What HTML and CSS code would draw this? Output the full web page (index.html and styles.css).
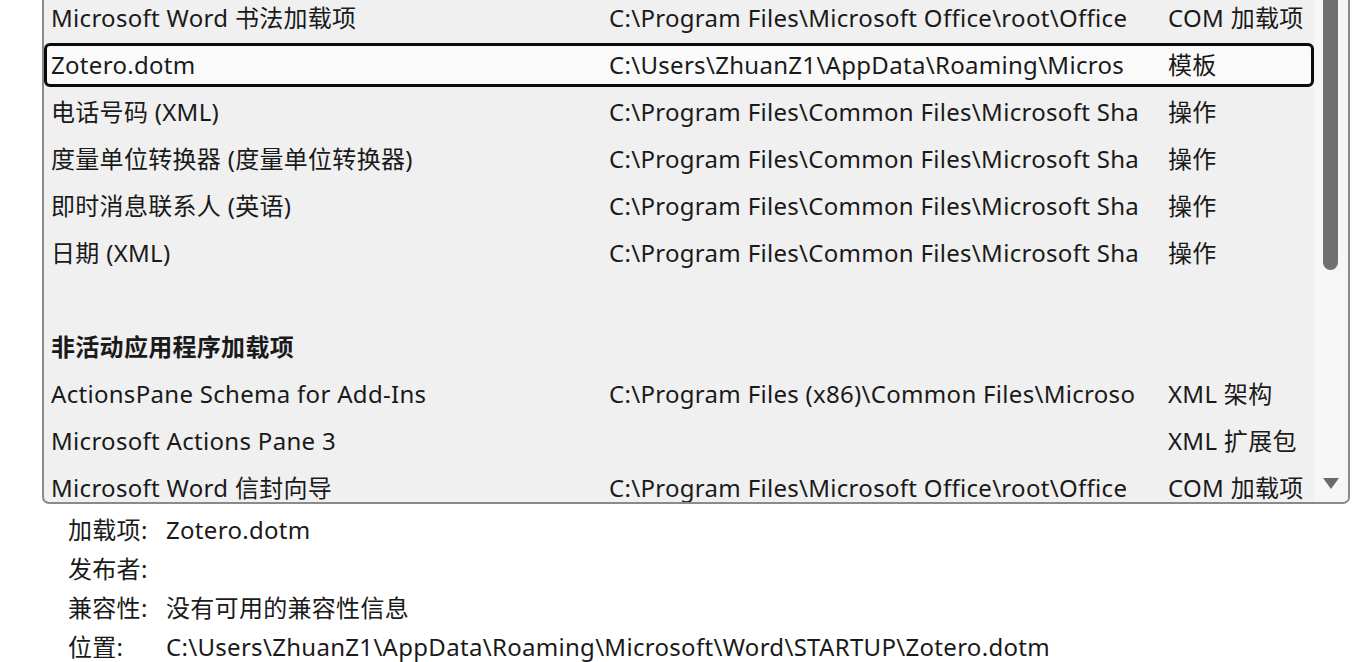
FILE: index.html
```html
<!DOCTYPE html>
<html lang="zh-CN">
<head>
    <meta charset="UTF-8">
    <title>加载项</title>
    <link rel="stylesheet" href="styles.css">
</head>
<body>

    <!-- Add-in list -->
    <div class="listbox">
        <div class="rows">
            <div class="row">
                <span>Microsoft Word 书法加载项</span>
                <span>C:\Program Files\Microsoft Office\root\Office</span>
                <span>COM 加载项</span>
            </div>
            <div class="row selected">
                <span>Zotero.dotm</span>
                <span>C:\Users\ZhuanZ1\AppData\Roaming\Micros</span>
                <span>模板</span>
            </div>
            <div class="row">
                <span>电话号码 (XML)</span>
                <span>C:\Program Files\Common Files\Microsoft Sha</span>
                <span>操作</span>
            </div>
            <div class="row">
                <span>度量单位转换器 (度量单位转换器)</span>
                <span>C:\Program Files\Common Files\Microsoft Sha</span>
                <span>操作</span>
            </div>
            <div class="row">
                <span>即时消息联系人 (英语)</span>
                <span>C:\Program Files\Common Files\Microsoft Sha</span>
                <span>操作</span>
            </div>
            <div class="row">
                <span>日期 (XML)</span>
                <span>C:\Program Files\Common Files\Microsoft Sha</span>
                <span>操作</span>
            </div>
            <div class="row"></div>
            <div class="row group">
                <span>非活动应用程序加载项</span>
            </div>
            <div class="row">
                <span>ActionsPane Schema for Add-Ins</span>
                <span>C:\Program Files (x86)\Common Files\Microso</span>
                <span>XML 架构</span>
            </div>
            <div class="row">
                <span>Microsoft Actions Pane 3</span>
                <span></span>
                <span>XML 扩展包</span>
            </div>
            <div class="row">
                <span>Microsoft Word 信封向导</span>
                <span>C:\Program Files\Microsoft Office\root\Office</span>
                <span>COM 加载项</span>
            </div>
        </div>

        <!-- Scrollbar -->
        <div class="scrollbar">
            <div class="thumb"></div>
            <div class="arrow-down"></div>
        </div>
    </div>

    <!-- Details of the selected add-in -->
    <div class="details">
        <span>加载项:</span><span>Zotero.dotm</span>
        <span>发布者:</span><span></span>
        <span>兼容性:</span><span>没有可用的兼容性信息</span>
        <span>位置:</span><span>C:\Users\ZhuanZ1\AppData\Roaming\Microsoft\Word\STARTUP\Zotero.dotm</span>
    </div>

</body>
</html>
```

FILE: styles.css
```css
body {
    margin: 0;
    background-color: #fff;
    color: #1a1a1a;
    font-family: "Noto Sans", "Noto Sans CJK SC", sans-serif;
    font-size: 24px;
    letter-spacing: 0.3px;
    overflow: hidden;
}

/* List box */
.listbox {
    display: flex;
    margin: -6px 0 0 42px;
    width: 1304px;
    height: 508px;
    border: 2px solid #8a8a8a;
    border-top: none;
    border-radius: 0 0 7px 7px;
    background-color: #f0f0f0;
    overflow: hidden;
}

.rows {
    flex: 1;
}

.row {
    display: grid;
    grid-template-columns: 558px 559px 1fr;
    align-items: center;
    height: 47px;
    padding-left: 7px;
    box-sizing: border-box;
    white-space: nowrap;
    line-height: 1.4;
}

.row.selected {
    height: 44px;
    margin: 2px 0 1px 0;
    padding-left: 4px;
    border: 3px solid #0a0a0a;
    border-radius: 6px;
    background-color: #fafafa;
}

.row.group {
    font-weight: bold;
}

/* Scrollbar */
.scrollbar {
    position: relative;
    width: 34px;
    background-color: #f6f6f6;
}

.thumb {
    margin-left: 9px;
    width: 15px;
    height: 276px;
    background-color: #707070;
    border-radius: 0 0 8px 8px;
}

.arrow-down {
    position: absolute;
    left: 9px;
    top: 484px;
    width: 0;
    height: 0;
    border-left: 8px solid transparent;
    border-right: 8px solid transparent;
    border-top: 11px solid #6a6a6a;
}

/* Details below the list */
.details {
    display: grid;
    grid-template-columns: 98px auto;
    grid-auto-rows: 39px;
    align-items: center;
    margin: 6px 0 0 68px;
    line-height: 1.4;
    white-space: nowrap;
}
```
